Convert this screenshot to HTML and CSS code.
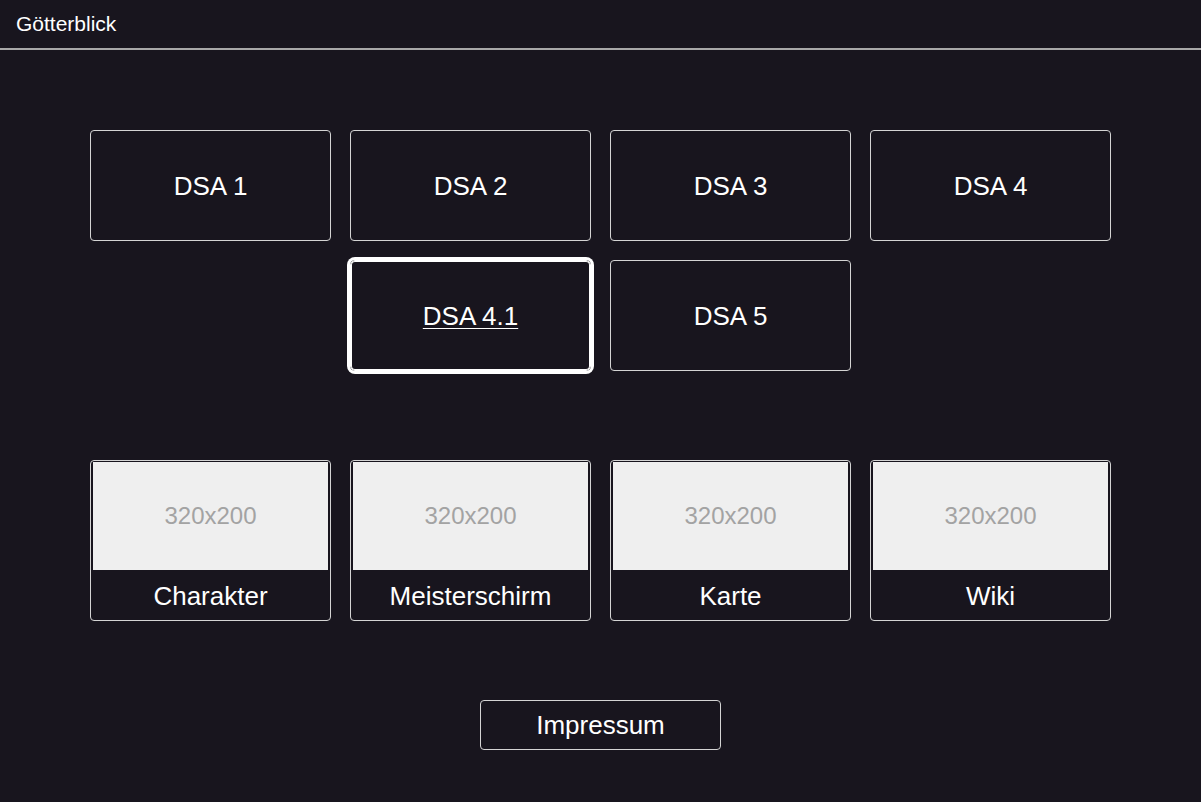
FILE: index.html
```html
<!DOCTYPE html>
<html lang="de">
<head>
<meta charset="utf-8">
<title>Götterblick</title>
<link rel="stylesheet" href="styles.css">
</head>
<body>
<header class="topbar">
  <span class="brand">Götterblick</span>
</header>
<main class="content">
  <nav class="editions">
    <a class="card edition">DSA 1</a>
    <a class="card edition">DSA 2</a>
    <a class="card edition">DSA 3</a>
    <a class="card edition">DSA 4</a>
    <a class="card edition active"><span class="label-underline">DSA 4.1</span></a>
    <a class="card edition">DSA 5</a>
  </nav>
  <section class="tools">
    <a class="card tool"><div class="thumb">320x200</div><div class="tool-label">Charakter</div></a>
    <a class="card tool"><div class="thumb">320x200</div><div class="tool-label">Meisterschirm</div></a>
    <a class="card tool"><div class="thumb">320x200</div><div class="tool-label">Karte</div></a>
    <a class="card tool"><div class="thumb">320x200</div><div class="tool-label">Wiki</div></a>
  </section>
  <div class="footer-row">
    <a class="card impressum">Impressum</a>
  </div>
</main>
</body>
</html>
```
FILE: styles.css
```css
html, body {
  margin: 0;
  padding: 0;
}
body {
  background: #18151e;
  color: #ffffff;
  font-family: "Liberation Sans", Arial, sans-serif;
  width: 1201px;
  height: 802px;
  overflow: hidden;
}
.topbar {
  box-sizing: border-box;
  height: 50px;
  border-bottom: 2px solid #a8a8a8;
  display: flex;
  align-items: center;
  padding-left: 16px;
}
.brand {
  font-size: 21px;
  color: #fff;
}
.content {
  display: flex;
  flex-direction: column;
  align-items: center;
  padding-top: 80px;
}
.editions {
  width: 1021px;
  display: flex;
  flex-wrap: wrap;
  justify-content: center;
  gap: 19px;
}
.card {
  box-sizing: border-box;
  border: 1px solid #d4d4d4;
  border-radius: 4px;
  color: #fff;
  text-decoration: none;
  display: flex;
}
.edition {
  width: 241px;
  height: 111px;
  align-items: center;
  justify-content: center;
  font-size: 26px;
  padding-top: 2px;
}
.edition.active {
  border-color: #fff;
  border-radius: 5px;
  box-shadow: 0 0 0 3px #fff, inset 0 0 0 1px #fff;
}
.label-underline {
  text-decoration: underline;
  text-underline-offset: 3px;
  text-decoration-thickness: 1px;
}
.tools {
  margin-top: 89px;
  width: 1021px;
  display: flex;
  gap: 19px;
}
.tool {
  width: 241px;
  height: 161px;
  flex-direction: column;
  padding: 1px 2px 0 2px;
}
.thumb {
  height: 108px;
  background: #efefef;
  color: #a3a3a3;
  font-size: 24px;
  display: flex;
  align-items: center;
  justify-content: center;
}
.tool-label {
  flex: 1;
  display: flex;
  align-items: center;
  justify-content: center;
  font-size: 26px;
  padding-top: 3px;
}
.footer-row {
  margin-top: 79px;
  display: flex;
  justify-content: center;
}
.impressum {
  width: 241px;
  height: 50px;
  align-items: center;
  justify-content: center;
  font-size: 26px;
  padding-top: 1px;
}
```
